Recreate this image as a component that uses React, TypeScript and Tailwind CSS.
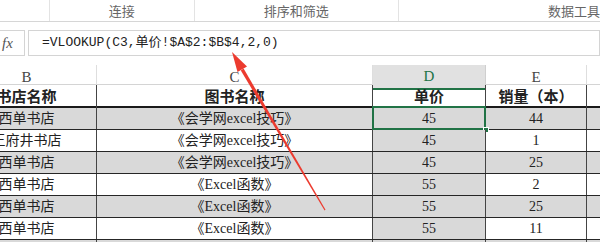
import React from 'react';

interface Row {
  store: string;
  book: string;
  price: string;
  qty: string;
  gray: boolean;
}

const rows: Row[] = [
  { store: '西单书店', book: '《会学网excel技巧》', price: '45', qty: '44', gray: true },
  { store: '王府井书店', book: '《会学网excel技巧》', price: '45', qty: '1', gray: false },
  { store: '西单书店', book: '《会学网excel技巧》', price: '45', qty: '25', gray: true },
  { store: '西单书店', book: '《Excel函数》', price: '55', qty: '2', gray: false },
  { store: '西单书店', book: '《Excel函数》', price: '55', qty: '25', gray: true },
  { store: '西单书店', book: '《Excel函数》', price: '55', qty: '11', gray: false },
  { store: '', book: '', price: '', qty: '', gray: true },
];

const cellFont = { fontFamily: '"Liberation Serif", "Noto Sans CJK SC", serif' };
const uiFont = { fontFamily: '"Noto Sans CJK SC", "Noto Sans", sans-serif' };

const App: React.FC = () => {
  return (
    <div className="relative w-[600px] h-[242px] overflow-hidden bg-white text-[#222]">
      {/* ribbon group labels */}
      <div className="flex h-[22px] border-b border-[#d6d6d6] text-[13px] text-[#666]" style={uiFont}>
        <div className="w-[51px] border-r border-[#e3e3e3]" />
        <div className="w-[147px] border-r border-[#e3e3e3] flex items-center justify-center">连接</div>
        <div className="w-[208px] border-r border-[#e3e3e3] flex items-center justify-center">排序和筛选</div>
        <div className="flex-1 flex items-center pl-[149px] whitespace-nowrap">数据工具</div>
      </div>

      {/* formula bar */}
      <div className="flex gap-[3px] mt-[8px] h-[26px]">
        <div className="w-[35px] ml-[-10px] border border-[#d4d4d4] flex items-center justify-center text-[15px] italic text-[#555]" style={{ fontFamily: '"Liberation Serif", serif' }}>
          fx
        </div>
        <div className="flex-1 border border-[#d4d4d4] flex items-center pl-[13px] text-[13px] text-[#222] whitespace-nowrap" style={{ fontFamily: '"Liberation Mono", "Noto Sans CJK SC", monospace' }}>
          =VLOOKUP(C3,单价!$A$2:$B$4,2,0)
        </div>
      </div>

      {/* column headers */}
      <div className="mt-[9px] ml-[-43px] grid grid-cols-[140px_276px_113px_101px_1fr] h-[20px] border-b border-[#d4d4d4] text-[15px] text-[#444]" style={cellFont}>
        <div className="border-r border-[#dedede] flex items-center justify-center">B</div>
        <div className="border-r border-[#dedede] flex items-center justify-center">C</div>
        <div className="bg-[#e1e1e1] border-r border-[#cfcfcf] border-b-2 border-b-[#217346] flex items-center justify-center text-[#217346]">D</div>
        <div className="border-r border-[#dedede] flex items-center justify-center">E</div>
        <div />
      </div>

      {/* table header row */}
      <div className="ml-[-43px] grid grid-cols-[140px_276px_113px_101px_1fr] h-[23px] border-b-2 border-[#1a1a1a] text-[15px] font-bold" style={uiFont}>
        <div className="border-r border-[#444] flex items-center justify-center">书店名称</div>
        <div className="border-r border-[#444] flex items-center justify-center">图书名称</div>
        <div className="border-r border-[#444] flex items-center justify-center">单价</div>
        <div className="border-r border-[#444] flex items-center justify-center">销量（本）</div>
        <div />
      </div>

      {/* data rows */}
      {rows.map((r, i) => (
        <div
          key={i}
          className={`ml-[-43px] grid grid-cols-[140px_276px_113px_101px_1fr] h-[22px] border-b border-[#262626] text-[14px] ${r.gray ? 'bg-[#d9d9d9]' : 'bg-white'}`}
          style={cellFont}
        >
          <div className="border-r border-[#444] flex items-center justify-center whitespace-nowrap">{r.store}</div>
          <div className="border-r border-[#444] flex items-center justify-center whitespace-nowrap">{r.book}</div>
          <div className="relative bg-[#d9d9d9] border-r border-[#444] flex items-center justify-center">
            {r.price}
            {i === 0 && (
              <>
                <div className="absolute left-[-1px] top-[-2px] right-[-1px] bottom-[-1px] border-2 border-[#217346]" />
                <div className="absolute right-[-4px] bottom-[-4px] w-[6px] h-[6px] bg-[#217346] border border-white" />
              </>
            )}
          </div>
          <div className="border-r border-[#444] flex items-center justify-center">{r.qty}</div>
          <div />
        </div>
      ))}

      {/* red annotation arrow */}
      <svg className="absolute left-0 top-0 pointer-events-none" width="600" height="242" viewBox="0 0 600 242">
        <polygon points="232,52 247,66.5 237.5,72" fill="#ec3b2f" />
        <polygon points="243.6,68.6 240.8,70.4 324.6,210.4 325.5,209.8" fill="#ec3b2f" />
      </svg>
    </div>
  );
};

export default App;
